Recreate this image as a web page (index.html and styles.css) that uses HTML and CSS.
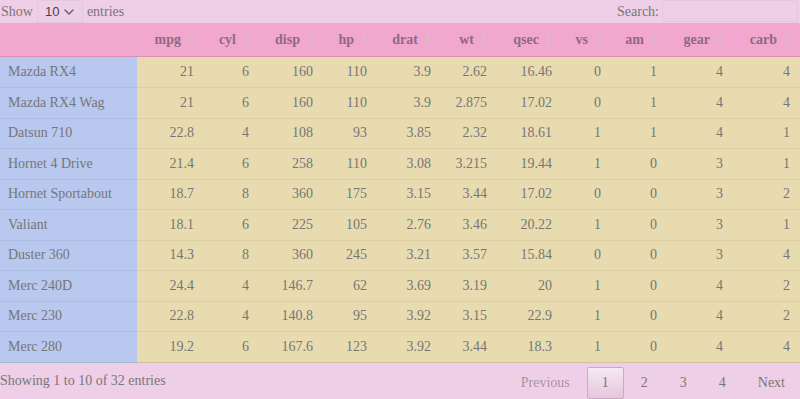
FILE: index.html
```html
<!DOCTYPE html>
<html>
<head>
<meta charset="utf-8">
<link rel="stylesheet" href="styles.css">
</head>
<body>
<div class="wrapper">
  <div class="topbar">
    <label class="length">Show
      <span class="select-wrap">
        <select class="select"><option>10</option><option>25</option><option>50</option><option>100</option></select>
        <svg class="chev" width="10" height="6" viewBox="0 0 10 6"><path d="M1 1 L5 5 L9 1" fill="none" stroke="#666" stroke-width="1.5" stroke-linecap="round" stroke-linejoin="round"/></svg>
      </span>
      entries</label>
    <label class="search">Search:<input class="search-input" type="search"></label>
  </div>
  <table class="dt">
    <colgroup>
      <col class="c-name"><col class="c67"><col class="c55"><col class="c64"><col class="c54"><col class="c64"><col class="c56"><col class="c65"><col class="c49"><col class="c56"><col class="c66"><col class="c67">
    </colgroup>
    <thead>
      <tr>
        <th class="blank"></th>
        <th class="sort">mpg</th><th class="sort">cyl</th><th class="sort">disp</th><th class="sort">hp</th><th class="sort">drat</th><th class="sort">wt</th><th class="sort">qsec</th><th class="sort">vs</th><th class="sort">am</th><th class="sort">gear</th><th class="sort">carb</th>
      </tr>
    </thead>
    <tbody>
      <tr><td class="name">Mazda RX4</td><td>21</td><td>6</td><td>160</td><td>110</td><td>3.9</td><td>2.62</td><td>16.46</td><td>0</td><td>1</td><td>4</td><td>4</td></tr>
      <tr><td class="name">Mazda RX4 Wag</td><td>21</td><td>6</td><td>160</td><td>110</td><td>3.9</td><td>2.875</td><td>17.02</td><td>0</td><td>1</td><td>4</td><td>4</td></tr>
      <tr><td class="name">Datsun 710</td><td>22.8</td><td>4</td><td>108</td><td>93</td><td>3.85</td><td>2.32</td><td>18.61</td><td>1</td><td>1</td><td>4</td><td>1</td></tr>
      <tr><td class="name">Hornet 4 Drive</td><td>21.4</td><td>6</td><td>258</td><td>110</td><td>3.08</td><td>3.215</td><td>19.44</td><td>1</td><td>0</td><td>3</td><td>1</td></tr>
      <tr><td class="name">Hornet Sportabout</td><td>18.7</td><td>8</td><td>360</td><td>175</td><td>3.15</td><td>3.44</td><td>17.02</td><td>0</td><td>0</td><td>3</td><td>2</td></tr>
      <tr><td class="name">Valiant</td><td>18.1</td><td>6</td><td>225</td><td>105</td><td>2.76</td><td>3.46</td><td>20.22</td><td>1</td><td>0</td><td>3</td><td>1</td></tr>
      <tr><td class="name">Duster 360</td><td>14.3</td><td>8</td><td>360</td><td>245</td><td>3.21</td><td>3.57</td><td>15.84</td><td>0</td><td>0</td><td>3</td><td>4</td></tr>
      <tr><td class="name">Merc 240D</td><td>24.4</td><td>4</td><td>146.7</td><td>62</td><td>3.69</td><td>3.19</td><td>20</td><td>1</td><td>0</td><td>4</td><td>2</td></tr>
      <tr><td class="name">Merc 230</td><td>22.8</td><td>4</td><td>140.8</td><td>95</td><td>3.92</td><td>3.15</td><td>22.9</td><td>1</td><td>0</td><td>4</td><td>2</td></tr>
      <tr><td class="name">Merc 280</td><td>19.2</td><td>6</td><td>167.6</td><td>123</td><td>3.92</td><td>3.44</td><td>18.3</td><td>1</td><td>0</td><td>4</td><td>4</td></tr>
    </tbody>
  </table>
  <div class="footer">
    <div class="info">Showing 1 to 10 of 32 entries</div>
    <div class="paginate">
      <span class="pbtn disabled">Previous</span>
      <span class="pbtn current">1</span>
      <span class="pbtn">2</span>
      <span class="pbtn">3</span>
      <span class="pbtn">4</span>
      <span class="pbtn">Next</span>
    </div>
  </div>
</div>
</body>
</html>
```
FILE: styles.css
```css
html, body {
  margin: 0;
  padding: 0;
  background: #efcfe7;
}
body {
  font-family: "Liberation Serif", "Times New Roman", serif;
  font-size: 14px;
  color: #767676;
}
.wrapper {
  width: 800px;
  height: 399px;
  overflow: hidden;
}
.topbar {
  height: 23px;
  display: flex;
  justify-content: space-between;
  align-items: flex-start;
}
.length {
  display: flex;
  align-items: center;
  height: 23px;
  padding-left: 1px;
  gap: 4px;
}
.select-wrap {
  position: relative;
  display: inline-block;
  height: 23px;
}
.select {
  appearance: none;
  -webkit-appearance: none;
  width: 46px;
  height: 23px;
  box-sizing: border-box;
  border: 1px solid #e0cadb;
  border-radius: 2px;
  background: #efcfe7;
  font-family: "Liberation Sans", Arial, sans-serif;
  font-size: 13px;
  color: #444;
  padding: 0 0 0 7px;
  margin: 0;
  outline: none;
}
.chev {
  position: absolute;
  right: 9px;
  top: 9px;
  pointer-events: none;
}
.search {
  display: flex;
  align-items: center;
  height: 23px;
  gap: 3px;
}
.search-input {
  width: 136px;
  height: 22px;
  box-sizing: border-box;
  margin: 0 2px 0 0;
  border: 1px solid #e0cadb;
  border-radius: 2px;
  background: #efcfe7;
  outline: none;
  align-self: flex-start;
}
.dt {
  width: 800px;
  border-collapse: collapse;
  table-layout: fixed;
  border-spacing: 0;
}
.c-name { width: 137px; }
.c67 { width: 67px; }
.c55 { width: 55px; }
.c64 { width: 64px; }
.c54 { width: 54px; }
.c56 { width: 56px; }
.c65 { width: 65px; }
.c49 { width: 49px; }
.c66 { width: 66px; }
.dt thead th {
  background: #f2a7cf;
  color: #8d6a85;
  font-weight: bold;
  text-align: right;
  height: 33px;
  padding: 0 23px 0 10px;
  line-height: 16px;
  border-bottom: 1px solid #d98fb8;
  position: relative;
}
.dt thead th.sort::before,
.dt thead th.sort::after {
  position: absolute;
  right: 10px;
  font-size: 8px;
  line-height: 8px;
  color: #e2b3cc;
  font-family: "DejaVu Sans", sans-serif;
}
.dt thead th.sort::before {
  content: "▲";
  top: 9px;
}
.dt thead th.sort::after {
  content: "▼";
  top: 17px;
}
.dt tbody td {
  background: #e8dbb0;
  text-align: right;
  padding: 0 10px;
  height: 29.5px;
  line-height: 16px;
  border-top: 1px solid #dccfa4;
  white-space: nowrap;
}
.dt tbody tr:first-child td {
  border-top: none;
  height: 30px;
}
.dt tbody td.name {
  background: #b9c8ee;
  text-align: left;
  padding-left: 8px;
  border-top-color: #adbde2;
}
.dt tbody tr:last-child td {
  border-bottom: 1px solid #cfc2a0;
}
.dt tbody tr:last-child td.name {
  border-bottom-color: #a9b6d8;
}
.footer {
  display: flex;
  justify-content: space-between;
  align-items: flex-start;
}
.info {
  padding-top: 10px;
  line-height: 16px;
}
.paginate {
  display: flex;
  padding-top: 4px;
}
.pbtn {
  display: inline-block;
  box-sizing: border-box;
  padding: 7px 14px;
  line-height: 16px;
  margin-left: 2px;
  border: 1px solid transparent;
  border-radius: 2px;
  color: #777;
  min-width: 21px;
  text-align: center;
}
.pbtn.disabled {
  color: #a595a3;
}
.pbtn.current {
  border-color: #c9aac2;
  background: linear-gradient(to bottom, #f6e8f2 0%, #e6c6de 100%);
  color: #777;
}
```
